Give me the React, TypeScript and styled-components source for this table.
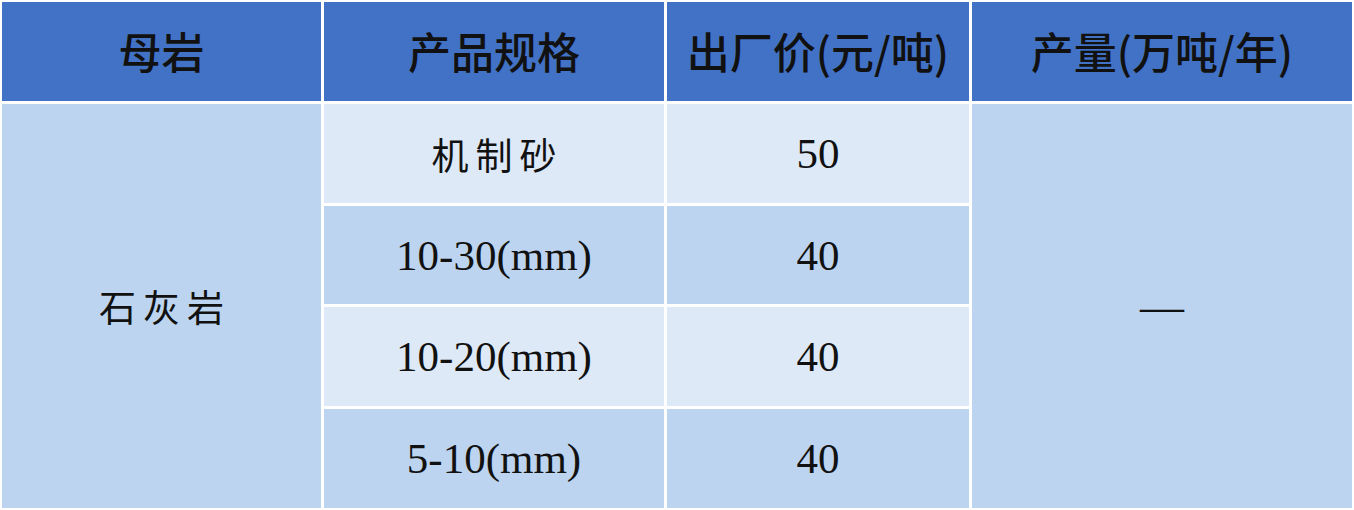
import * as React from "react";
import styled, { createGlobalStyle } from "styled-components";

const GlobalStyle = createGlobalStyle`
  html, body {
    margin: 0;
    padding: 0;
    background: #ffffff;
  }
`;

const colors = {
  header: "#4272c6",
  mid: "#bcd4ef",
  light: "#dde9f7",
  text: "#111111",
};

const Table = styled.div`
  display: grid;
  grid-template-columns: 319px 340px 302px 1fr;
  grid-template-rows: 99px 99px 98px 99px 99px;
  gap: 3px;
  padding: 2px;
  width: 1354px;
  height: 510px;
  box-sizing: border-box;
  background: #ffffff;
`;

const HeadCell = styled.div`
  display: flex;
  align-items: center;
  justify-content: center;
  background: ${colors.header};
  color: ${colors.text};
  font-family: "Noto Sans CJK SC", "Noto Sans", sans-serif;
  font-size: 43px;
  font-weight: 500;
  padding-bottom: 4px;
`;

const Cell = styled.div<{ $shade: "mid" | "light"; $span?: number }>`
  display: flex;
  align-items: center;
  justify-content: center;
  background: ${(p) => colors[p.$shade]};
  color: ${colors.text};
  grid-row: ${(p) => (p.$span ? `span ${p.$span}` : "auto")};
`;

const Num = styled.span`
  font-family: "Liberation Serif", "Times New Roman", serif;
  font-size: 43px;
`;

const Label = styled.span`
  font-family: "Noto Sans CJK SC", sans-serif;
  font-size: 37px;
  font-weight: 400;
  letter-spacing: 7px;
  margin-right: -7px;
`;

const Dash = styled.span`
  font-family: "Liberation Serif", serif;
  font-size: 44px;
`;

const rows = [
  { spec: "机制砂", cjk: true, price: "50", shade: "light" as const },
  { spec: "10-30(mm)", cjk: false, price: "40", shade: "mid" as const },
  { spec: "10-20(mm)", cjk: false, price: "40", shade: "light" as const },
  { spec: "5-10(mm)", cjk: false, price: "40", shade: "mid" as const },
];

export default function App() {
  return (
    <>
      <GlobalStyle />
      <Table>
        <HeadCell>母岩</HeadCell>
        <HeadCell>产品规格</HeadCell>
        <HeadCell>出厂价(元/吨)</HeadCell>
        <HeadCell>产量(万吨/年)</HeadCell>
        {rows.map((r, i) => (
          <React.Fragment key={i}>
            {i === 0 && (
              <Cell $shade="mid" $span={4}>
                <Label>石灰岩</Label>
              </Cell>
            )}
            <Cell $shade={r.shade}>
              {r.cjk ? <Label>{r.spec}</Label> : <Num>{r.spec}</Num>}
            </Cell>
            <Cell $shade={r.shade}>
              <Num>{r.price}</Num>
            </Cell>
            {i === 0 && (
              <Cell $shade="mid" $span={4}>
                <Dash>—</Dash>
              </Cell>
            )}
          </React.Fragment>
        ))}
      </Table>
    </>
  );
}
